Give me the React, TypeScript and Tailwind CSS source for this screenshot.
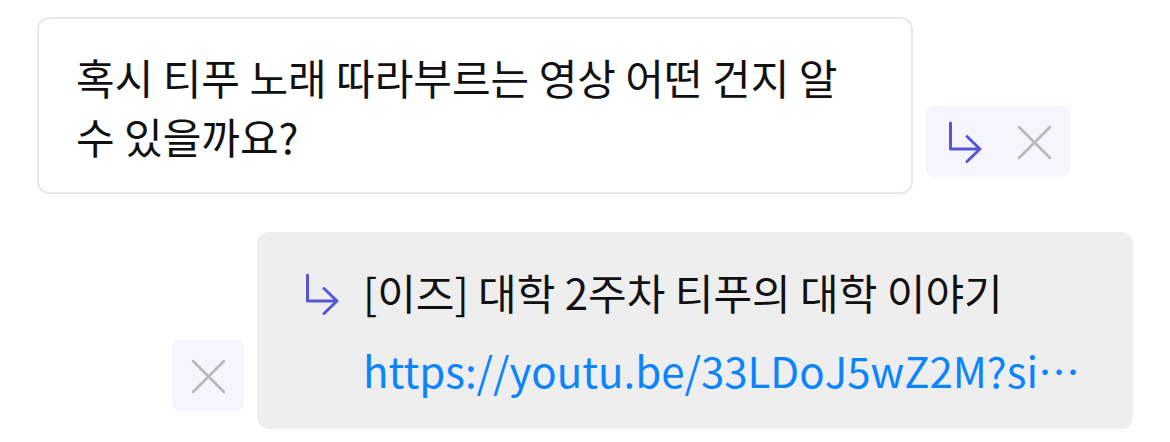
import { useState } from "react"

function ReplyArrow({ className = "" }: { className?: string }) {
  return (
    <svg width="40" height="44" viewBox="0 0 40 44" fill="none" className={className}>
      <path
        d="M4.5 3V29H34M21 16.5L34 29L21 41.5"
        stroke="#5856D6"
        strokeWidth="3"
        strokeLinecap="round"
        strokeLinejoin="round"
      />
    </svg>
  )
}

function CloseIcon() {
  return (
    <svg width="40" height="40" viewBox="0 0 40 40" fill="none">
      <path d="M5 5L36 36M36 5L5 36" stroke="#B8B8B8" strokeWidth="2.5" strokeLinecap="round" />
    </svg>
  )
}

export default function App() {
  const [replying, setReplying] = useState(false)

  return (
    <div
      className="w-[1170px] h-[442px] overflow-hidden bg-white px-[37px] pt-[17px] flex flex-col gap-[38px] text-[#111111]"
      style={{ fontFamily: '"Noto Sans CJK KR", "Noto Sans", sans-serif' }}
    >
      {/* incoming message */}
      <div className="flex items-end gap-[13px]">
        <div className="w-[876px] h-[177px] shrink-0 rounded-[12px] border-2 border-[#e8e8e8] bg-white pl-[37px] flex items-center">
          <p className="text-[42px] leading-[59px]">
            혹시 티푸 노래 따라부르는 영상 어떤 건지 알
            <br />
            수 있을까요?
          </p>
        </div>
        <div className="mb-[17px] w-[144px] h-[71px] rounded-[8px] bg-[#f5f5fe] pl-[20px] flex items-center gap-[28px]">
          <button onClick={() => setReplying(!replying)}>
            <ReplyArrow />
          </button>
          <button>
            <CloseIcon />
          </button>
        </div>
      </div>

      {/* reply draft */}
      <div className="flex items-end justify-end gap-[13px]">
        <button className="mb-[18px] w-[72px] h-[71px] rounded-[8px] bg-[#f5f5fe] flex items-center justify-center">
          <CloseIcon />
        </button>
        <div className="w-[876px] h-[197px] shrink-0 rounded-[12px] bg-[#eeeeee] pl-[46px] pr-[52px] flex flex-col justify-center">
          <div className="flex items-center gap-[20px]">
            <ReplyArrow className="mt-[4px]" />
            <span className="text-[42px] leading-[60px] whitespace-nowrap">[이즈] 대학 2주차 티푸의 대학 이야기</span>
          </div>
          <div className="pl-[60px] mt-[18px] text-[42px] leading-[60px] text-[#0a84ff] truncate">
            https://youtu.be/33LDoJ5wZ2M?si=xYz8kQ2mP1aL
          </div>
        </div>
      </div>
    </div>
  )
}
